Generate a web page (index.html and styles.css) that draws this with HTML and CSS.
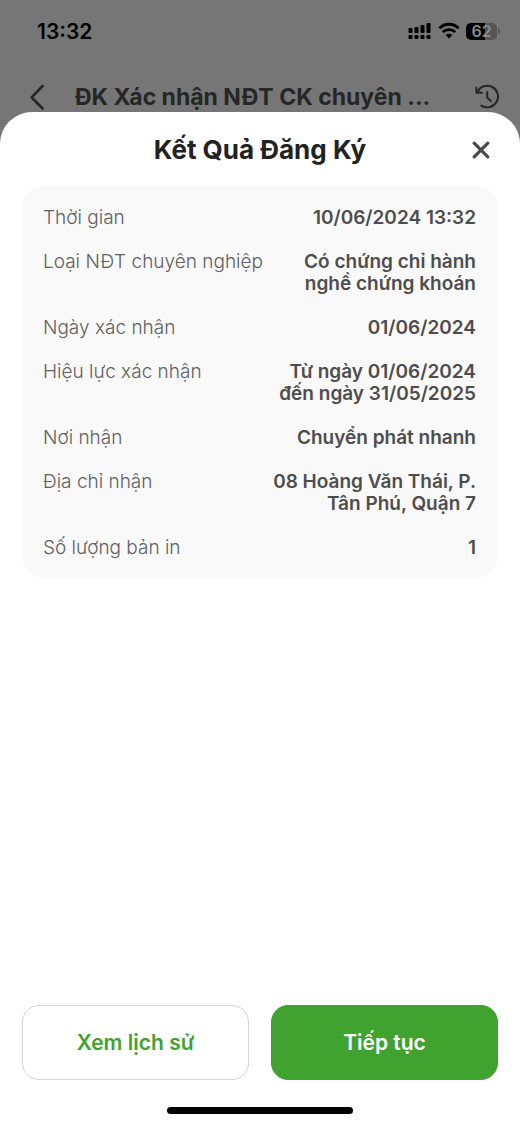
FILE: index.html
```html
<!DOCTYPE html>
<html lang="vi">
<head>
  <meta charset="UTF-8">
  <meta name="viewport" content="width=device-width, initial-scale=1">
  <title>Kết Quả Đăng Ký</title>
  <link rel="stylesheet" href="styles.css">
</head>
<body>
  <div class="status-bar">
    <span class="time">13:32</span>
    <div class="status-icons">
      <svg width="24" height="18" viewBox="0 0 24 18">
        <g fill="#000">
          <rect x="0.5" y="6" width="4" height="5" rx="1"/>
          <rect x="6.5" y="5" width="4" height="6" rx="1"/>
          <rect x="12.5" y="3" width="4" height="8" rx="1"/>
          <rect x="18.5" y="1" width="4" height="10" rx="1"/>
          <rect x="0.5" y="13" width="4" height="4" rx="1.2"/>
          <rect x="6.5" y="13" width="4" height="4" rx="1.2"/>
          <rect x="12.5" y="13" width="4" height="4" rx="1.2"/>
          <rect x="18.5" y="13" width="4" height="4" rx="1.2"/>
        </g>
      </svg>
      <svg width="22" height="18" viewBox="0 0 22 18">
        <g fill="none" stroke="#000" stroke-width="2.8">
          <path d="M1.4 6.2a13.6 13.6 0 0 1 19.2 0"/>
          <path d="M4.8 10.1a8.9 8.9 0 0 1 12.4 0"/>
        </g>
        <path d="M7.6 13.1a4.9 4.9 0 0 1 6.8 0L11 16.6z" fill="#000"/>
      </svg>
      <div class="battery">
        <span class="battery-body">62</span>
        <span class="battery-tip"></span>
      </div>
    </div>
  </div>

  <header class="nav-bar">
    <button class="icon-button" aria-label="Quay lại">
      <svg width="16" height="26" viewBox="0 0 16 26" fill="none" stroke="#262626" stroke-width="2.6" stroke-linecap="round" stroke-linejoin="round">
        <path d="M13.6 2L2.6 13.3 13.6 24.5"/>
      </svg>
    </button>
    <h2 class="nav-title">ĐK Xác nhận NĐT CK chuyên ...</h2>
    <button class="icon-button" aria-label="Lịch sử">
      <svg width="24" height="26" viewBox="0 0 24 26" fill="none" stroke="#262626" stroke-width="2" stroke-linecap="round" stroke-linejoin="round">
        <path d="M2.2 8.4A10.8 10.8 0 1 1 6.4 21.6"/>
        <path d="M1.4 3.4V8.8H7"/>
        <path d="M12.2 8v5.5l3.6 3.5"/>
      </svg>
    </button>
  </header>

  <main class="sheet">
    <div class="sheet-header">
      <h1>Kết Quả Đăng Ký</h1>
      <button class="icon-button close-button" aria-label="Đóng">
        <svg width="18" height="18" viewBox="0 0 18 18" stroke="#4a4a4a" stroke-width="3.2" stroke-linecap="round">
          <path d="M2.2 2.2l13.6 13.6M15.8 2.2L2.2 15.8"/>
        </svg>
      </button>
    </div>

    <dl class="result-card">
      <div class="row">
        <dt>Thời gian</dt>
        <dd>10/06/2024 13:32</dd>
      </div>
      <div class="row">
        <dt>Loại NĐT chuyên nghiệp</dt>
        <dd>Có chứng chỉ hành nghề chứng khoán</dd>
      </div>
      <div class="row">
        <dt>Ngày xác nhận</dt>
        <dd>01/06/2024</dd>
      </div>
      <div class="row">
        <dt>Hiệu lực xác nhận</dt>
        <dd>Từ ngày 01/06/2024 đến ngày 31/05/2025</dd>
      </div>
      <div class="row">
        <dt>Nơi nhận</dt>
        <dd>Chuyển phát nhanh</dd>
      </div>
      <div class="row">
        <dt>Địa chỉ nhận</dt>
        <dd>08 Hoàng Văn Thái, P. Tân Phú, Quận 7</dd>
      </div>
      <div class="row">
        <dt>Số lượng bản in</dt>
        <dd>1</dd>
      </div>
    </dl>

    <div class="actions">
      <button class="btn btn-outline">Xem lịch sử</button>
      <button class="btn btn-primary">Tiếp tục</button>
    </div>
    <div class="home-indicator"></div>
  </main>
</body>
</html>
```
FILE: styles.css
```css
* {
  box-sizing: border-box;
}
body {
  margin: 0;
  min-height: 100vh;
  display: flex;
  flex-direction: column;
  font-family: Inter, 'Liberation Sans', sans-serif;
  background: #767676;
  color: #222;
}
h1, h2, dl, dd {
  margin: 0;
}
button {
  font-family: inherit;
  cursor: pointer;
}
svg {
  display: block;
}

/* status bar */
.status-bar {
  display: flex;
  justify-content: space-between;
  align-items: center;
  height: 62px;
  padding: 0 20px 0 37px;
}
.time {
  font-size: 21px;
  font-weight: 600;
  color: #000;
}
.status-icons {
  display: flex;
  align-items: center;
  gap: 6px;
}
.battery {
  display: flex;
  align-items: center;
  gap: 1px;
}
.battery-body {
  width: 31px;
  height: 17px;
  border-radius: 5px;
  background: linear-gradient(90deg, #000 62%, #555 62%);
  color: #8a8a8a;
  font-size: 16px;
  font-weight: 600;
  line-height: 17px;
  text-align: center;
}
.battery-tip {
  width: 2px;
  height: 6px;
  border-radius: 0 2px 2px 0;
  background: #555;
}

/* page header behind the sheet */
.nav-bar {
  display: flex;
  align-items: center;
  height: 50px;
  padding: 20px 21px 0 29px;
}
.nav-title {
  flex: 1;
  padding-left: 30px;
  font-size: 23px;
  font-weight: 700;
  line-height: 30px;
  color: #262626;
  white-space: nowrap;
}
.icon-button {
  padding: 0;
  border: none;
  background: none;
}

/* bottom sheet */
.sheet {
  flex: 1;
  display: flex;
  flex-direction: column;
  padding: 0 22px 11px;
  border-radius: 32px 32px 0 0;
  background: #fff;
}
.sheet-header {
  position: relative;
  display: flex;
  justify-content: center;
  align-items: center;
  height: 74px;
  padding-top: 2px;
}
.sheet-header h1 {
  font-size: 26px;
  font-weight: 700;
  line-height: 32px;
}
.close-button {
  position: absolute;
  right: 8px;
}
.result-card {
  display: flex;
  flex-direction: column;
  gap: 22px;
  padding: 21px 22px 19px 21px;
  border-radius: 22px;
  background: #f9f9f9;
}
.row {
  display: flex;
  justify-content: space-between;
  font-size: 19px;
  line-height: 22px;
}
.row dt {
  font-weight: 300;
  color: #606060;
  white-space: nowrap;
}
.row dd {
  max-width: 50%;
  font-weight: 600;
  color: #4d4d4d;
  text-align: right;
}

/* footer buttons */
.actions {
  display: flex;
  gap: 22px;
  margin-top: auto;
}
.btn {
  flex: 1;
  height: 75px;
  border: 1px solid #d4d4d4;
  border-radius: 17px;
  font-size: 21px;
  font-weight: 600;
}
.btn-outline {
  background: #fff;
  color: #40a22f;
}
.btn-primary {
  border-color: #40a22f;
  background: #40a22f;
  color: #fff;
}
.home-indicator {
  width: 186px;
  height: 7px;
  margin: 27px auto 0;
  border-radius: 4px;
  background: #000;
}
```
